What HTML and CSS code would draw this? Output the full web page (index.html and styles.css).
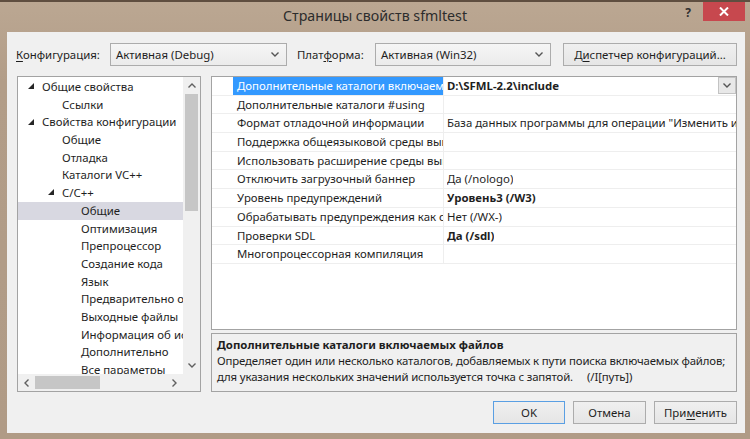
FILE: index.html
```
<!DOCTYPE html>
<html lang="ru">
<head>
  <meta charset="UTF-8">
  <title>Страницы свойств sfmltest</title>
  <link rel="stylesheet" href="styles.css">
</head>
<body>
<div class="window">
  <div class="titlebar">
    <div class="title">Страницы свойств sfmltest</div>
    <div class="controls">
      <div class="help">?</div>
      <div class="close">
        <svg width="10" height="9" viewBox="0 0 10 9"><path d="M1 0.5 L9 8.5 M9 0.5 L1 8.5" stroke="#fff" stroke-width="2"/></svg>
      </div>
    </div>
  </div>

  <div class="client">
    <div class="config">
      <label class="lbl lbl-conf"><u>К</u>онфигурация:</label>
      <div class="combo combo-conf">
        <span>Активная (Debug)</span>
        <svg width="8" height="5" viewBox="0 0 8 5"><path d="M0.5 0.5 L4 4 L7.5 0.5" fill="none" stroke="#555" stroke-width="1.4"/></svg>
      </div>
      <label class="lbl lbl-plat">Плат<u>ф</u>орма:</label>
      <div class="combo combo-plat">
        <span>Активная (Win32)</span>
        <svg width="8" height="5" viewBox="0 0 8 5"><path d="M0.5 0.5 L4 4 L7.5 0.5" fill="none" stroke="#555" stroke-width="1.4"/></svg>
      </div>
      <button class="btn btn-manager">Д<u>и</u>спетчер конфигураций...</button>
    </div>

    <div class="panes">
      <div class="tree">
        <ul class="tree-list">
          <li class="lv0"><i class="tw"><svg width="6" height="6" viewBox="0 0 6 6"><path d="M6 0V6H0Z" fill="#262626"/></svg></i>Общие свойства</li>
          <li class="lv1"><i class="tw"></i>Ссылки</li>
          <li class="lv0"><i class="tw"><svg width="6" height="6" viewBox="0 0 6 6"><path d="M6 0V6H0Z" fill="#262626"/></svg></i>Свойства конфигурации</li>
          <li class="lv1"><i class="tw"></i>Общие</li>
          <li class="lv1"><i class="tw"></i>Отладка</li>
          <li class="lv1"><i class="tw"></i>Каталоги VC++</li>
          <li class="lv1"><i class="tw"><svg width="6" height="6" viewBox="0 0 6 6"><path d="M6 0V6H0Z" fill="#262626"/></svg></i>C/C++</li>
          <li class="lv2 selected"><i class="tw"></i>Общие</li>
          <li class="lv2"><i class="tw"></i>Оптимизация</li>
          <li class="lv2"><i class="tw"></i>Препроцессор</li>
          <li class="lv2"><i class="tw"></i>Создание кода</li>
          <li class="lv2"><i class="tw"></i>Язык</li>
          <li class="lv2"><i class="tw"></i>Предварительно откомпилированные заголовки</li>
          <li class="lv2"><i class="tw"></i>Выходные файлы</li>
          <li class="lv2"><i class="tw"></i>Информация об исходниках</li>
          <li class="lv2"><i class="tw"></i>Дополнительно</li>
          <li class="lv2"><i class="tw"></i>Все параметры</li>
          <li class="lv2"><i class="tw"></i>Командная строка</li>
        </ul>
        <div class="vscroll">
          <div class="arrow">
            <svg width="8" height="5" viewBox="0 0 8 5"><path d="M0.5 4.5 L4 1 L7.5 4.5" fill="none" stroke="#606060" stroke-width="1.4"/></svg>
          </div>
          <div class="vtrack"><div class="vthumb"></div></div>
          <div class="arrow">
            <svg width="8" height="5" viewBox="0 0 8 5"><path d="M0.5 0.5 L4 4 L7.5 0.5" fill="none" stroke="#606060" stroke-width="1.4"/></svg>
          </div>
        </div>
        <div class="hscroll">
          <div class="arrow">
            <svg width="5" height="8" viewBox="0 0 5 8"><path d="M4.5 0.5 L1 4 L4.5 7.5" fill="none" stroke="#606060" stroke-width="1.4"/></svg>
          </div>
          <div class="htrack"><div class="hthumb"></div></div>
          <div class="arrow">
            <svg width="5" height="8" viewBox="0 0 5 8"><path d="M0.5 0.5 L4 4 L0.5 7.5" fill="none" stroke="#606060" stroke-width="1.4"/></svg>
          </div>
        </div>
        <div class="corner"></div>
      </div>

      <div class="right">
        <div class="grid">
          <div class="row">
            <div class="gutter"></div>
            <div class="name active">Дополнительные каталоги включаемых файлов</div>
            <div class="value bold"><span class="vtext">D:\SFML-2.2\include</span>
              <span class="drop"><svg width="8" height="5" viewBox="0 0 8 5"><path d="M0.5 0.5 L4 4 L7.5 0.5" fill="none" stroke="#555" stroke-width="1.4"/></svg></span>
            </div>
          </div>
          <div class="row">
            <div class="gutter"></div>
            <div class="name">Дополнительные каталоги #using</div>
            <div class="value"></div>
          </div>
          <div class="row">
            <div class="gutter"></div>
            <div class="name">Формат отладочной информации</div>
            <div class="value"><span class="vtext">База данных программы для операции "Изменить и продолжить" (/ZI)</span></div>
          </div>
          <div class="row">
            <div class="gutter"></div>
            <div class="name">Поддержка общеязыковой среды выполнения</div>
            <div class="value"></div>
          </div>
          <div class="row">
            <div class="gutter"></div>
            <div class="name">Использовать расширение среды выполнения Windows</div>
            <div class="value"></div>
          </div>
          <div class="row">
            <div class="gutter"></div>
            <div class="name">Отключить загрузочный баннер</div>
            <div class="value"><span class="vtext">Да (/nologo)</span></div>
          </div>
          <div class="row">
            <div class="gutter"></div>
            <div class="name">Уровень предупреждений</div>
            <div class="value bold"><span class="vtext">Уровень3 (/W3)</span></div>
          </div>
          <div class="row">
            <div class="gutter"></div>
            <div class="name">Обрабатывать предупреждения как ошибки</div>
            <div class="value"><span class="vtext">Нет (/WX-)</span></div>
          </div>
          <div class="row">
            <div class="gutter"></div>
            <div class="name">Проверки SDL</div>
            <div class="value bold"><span class="vtext">Да (/sdl)</span></div>
          </div>
          <div class="row">
            <div class="gutter"></div>
            <div class="name">Многопроцессорная компиляция</div>
            <div class="value"></div>
          </div>
        </div>
        <div class="desc">
          <div class="desc-title">Дополнительные каталоги включаемых файлов</div>
          <div class="desc-text">Определяет один или несколько каталогов, добавляемых к пути поиска включаемых файлов;</div>
          <div class="desc-text">для указания нескольких значений используется точка с запятой.&nbsp;&nbsp;&nbsp;&nbsp;&nbsp;(/I[путь])</div>
        </div>
      </div>
    </div>

    <div class="buttons">
      <button class="btn btn-ok">OK</button>
      <button class="btn btn-cancel">Отмена</button>
      <button class="btn btn-apply">При<u>м</u>енить</button>
    </div>
  </div>
</div>
</body>
</html>
```

FILE: styles.css
```
* {
  margin: 0;
  padding: 0;
  box-sizing: border-box;
}
body {
  width: 750px;
  height: 439px;
  overflow: hidden;
  background: #b5a08b;
  font-family: "Noto Sans", "DejaVu Sans", sans-serif;
  font-size: 11.4px;
  color: #1e1e1e;
}
u {
  text-decoration: underline;
  text-underline-offset: 2px;
}

/* window frame */
.window {
  height: 439px;
  display: flex;
  flex-direction: column;
  border-top: 2px solid #5f4e40;
  background: linear-gradient(#bba792, #b29d88 80px, #b09b86);
}
.titlebar {
  height: 30px;
  flex: none;
  display: grid;
  grid-template-columns: 1fr auto 1fr;
}
.title {
  grid-column: 2;
  font-size: 14.2px;
  color: #2c2c2c;
  padding-top: 4px;
}
.controls {
  grid-column: 3;
  display: flex;
  justify-content: flex-end;
  align-items: flex-start;
  padding-right: 5px;
}
.help {
  width: 30px;
  text-align: center;
  font-weight: bold;
  font-size: 12px;
  color: #303030;
  padding-top: 2px;
}
.close {
  width: 42px;
  height: 19px;
  background: #c7484e;
  display: flex;
  align-items: center;
  justify-content: center;
}

.client {
  flex: 1;
  margin: 0 5px 6px 7px;
  background: #f0f0f0;
  padding: 11px 8px 9px 9px;
  display: flex;
  flex-direction: column;
}

/* top row */
.config {
  height: 23px;
  flex: none;
  display: flex;
  align-items: center;
}
.lbl {
  flex: none;
}
.lbl-conf {
  width: 94px;
}
.lbl-plat {
  width: 88px;
  padding-left: 10px;
}
.combo {
  height: 23px;
  border: 1px solid #acacac;
  background: linear-gradient(#f6f6f6, #ebebeb);
  display: flex;
  align-items: center;
  justify-content: space-between;
  padding: 0 7px 0 5px;
  flex: none;
}
.combo-conf {
  width: 177px;
}
.combo-plat {
  width: 176px;
}
.btn {
  font-family: inherit;
  font-size: 11.4px;
  color: #1e1e1e;
  height: 23px;
  border: 1px solid #acacac;
  background: linear-gradient(#f0f0f0, #e5e5e5);
}
.btn-manager {
  margin-left: 12px;
  width: 174px;
}

/* panes */
.panes {
  margin-top: 10px;
  height: 316px;
  flex: none;
  display: flex;
  gap: 10px;
}
.tree {
  width: 184px;
  margin-left: 1px;
  flex: none;
  border: 1px solid #a3a3a3;
  background: #fff;
  display: grid;
  grid-template-columns: 165px 17px;
  grid-template-rows: 297px 17px;
  overflow: hidden;
}
.tree-list {
  list-style: none;
  padding-top: 1px;
  overflow: hidden;
}
.tree-list li {
  height: 17.7px;
  line-height: 17.7px;
  white-space: nowrap;
  display: flex;
  align-items: center;
}
.tree-list .lv0 {
  padding-left: 6px;
}
.tree-list .lv1 {
  padding-left: 26px;
}
.tree-list .lv2 {
  padding-left: 45px;
}
.tw {
  width: 18px;
  flex: none;
  display: flex;
  align-items: center;
  padding-left: 4px;
  padding-bottom: 1px;
}
.tree-list .selected {
  background: #d8d8e1;
}
.vscroll {
  background: #f0f0f0;
  display: flex;
  flex-direction: column;
}
.vscroll .arrow {
  height: 17px;
  display: flex;
  align-items: center;
  justify-content: center;
}
.vtrack {
  flex: 1;
  padding: 0 2px;
}
.vthumb {
  height: 117px;
  background: #c6c6c6;
}
.hscroll {
  background: #f0f0f0;
  display: flex;
}
.hscroll .arrow {
  width: 17px;
  display: flex;
  align-items: center;
  justify-content: center;
}
.htrack {
  flex: 1;
  padding: 2px 0;
}
.hthumb {
  width: 65px;
  height: 100%;
  background: #c6c6c6;
}
.corner {
  background: #f0f0f0;
}

/* property grid */
.right {
  flex: 1;
  min-width: 0;
  display: flex;
  flex-direction: column;
}
.grid {
  height: 254px;
  border: 1px solid #a3a3a3;
  background: #fff;
  overflow: hidden;
}
.row {
  height: 18.7px;
  display: flex;
  border-bottom: 1px solid #eeeeee;
  line-height: 17.7px;
  white-space: nowrap;
}
.gutter {
  width: 21px;
  flex: none;
}
.name {
  width: 211px;
  flex: none;
  overflow: hidden;
  padding-left: 4px;
  border-right: 1px solid #eeeeee;
}
.name.active {
  background: #3399ff;
  color: #fff;
}
.value {
  flex: 1;
  min-width: 0;
  overflow: hidden;
  padding-left: 3px;
  display: flex;
  justify-content: space-between;
}
.vtext {
  overflow: hidden;
}
.bold {
  font-weight: bold;
}
.drop {
  width: 18px;
  height: 17px;
  flex: none;
  margin-left: 4px;
  border: 1px solid #c3c3c3;
  background: #e8e8e8;
  display: flex;
  align-items: center;
  justify-content: center;
}

.desc {
  margin-top: 3px;
  height: 59px;
  border: 1px solid #a3a3a3;
  background: #f0f0f0;
  padding: 3px 5px 0;
  line-height: 16px;
  white-space: nowrap;
  overflow: hidden;
}
.desc-title {
  font-weight: bold;
}
.desc-text {
  letter-spacing: -0.15px;
}

/* bottom buttons */
.buttons {
  margin-top: 9px;
  height: 23px;
  flex: none;
  display: flex;
  justify-content: flex-end;
  gap: 8px;
}
.btn-ok {
  width: 72px;
  border-color: #5a9fe3;
}
.btn-cancel {
  width: 73px;
}
.btn-apply {
  width: 83px;
}
```
